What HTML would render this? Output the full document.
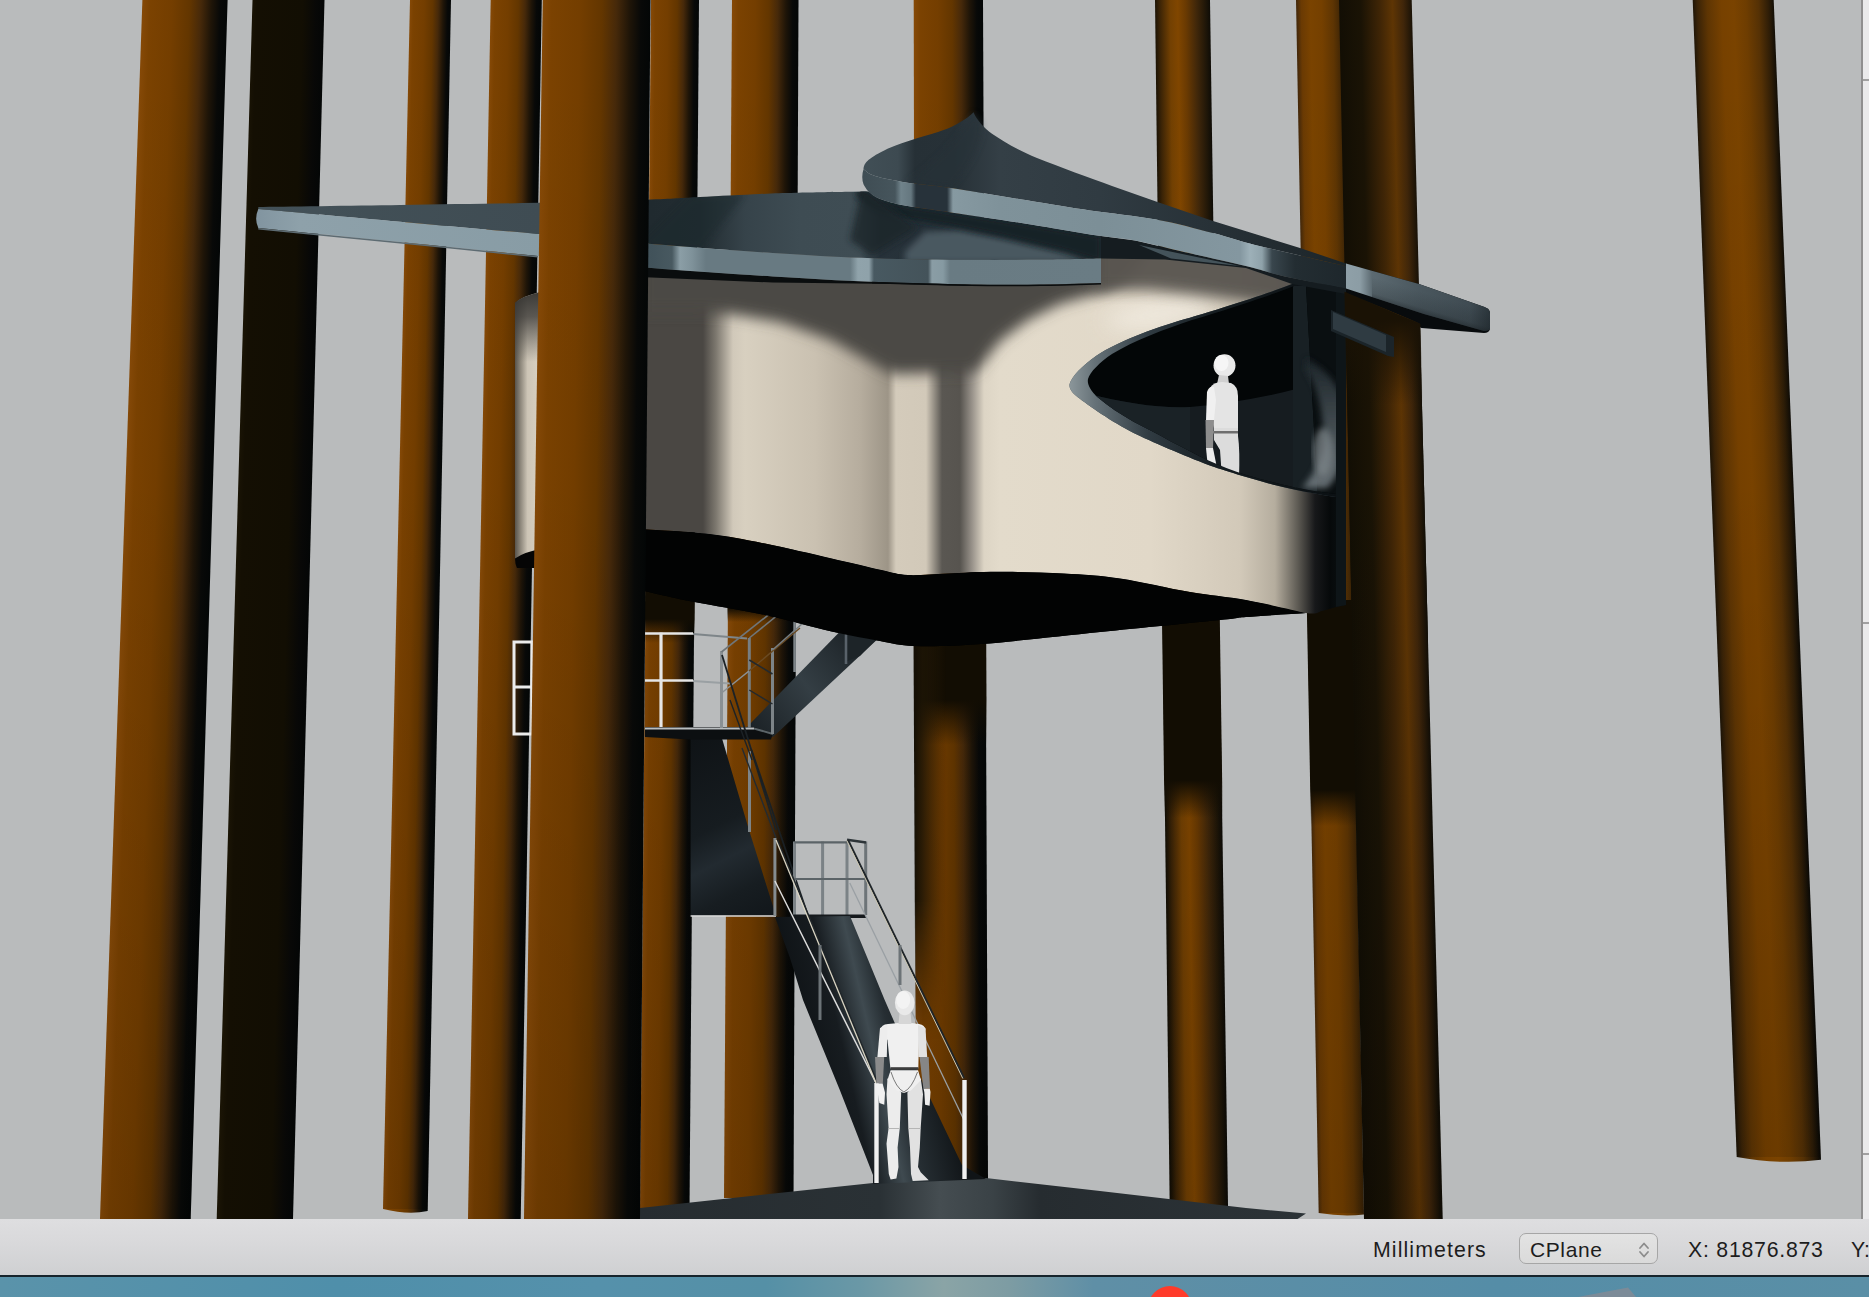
<!DOCTYPE html>
<html lang="en">
<head>
<meta charset="utf-8">
<title>Rhino viewport</title>
<style>
html,body{margin:0;padding:0;}
body{width:1869px;height:1297px;overflow:hidden;position:relative;background:#e9e9e9;font-family:"Liberation Sans",sans-serif;}
#vp{position:absolute;left:0;top:0;width:1862px;height:1219px;background:#b9bbbc;overflow:hidden;}
#side{position:absolute;left:1861px;top:0;width:8px;height:1219px;background:#eaeaeb;border-left:2px solid #8f8f8f;box-sizing:border-box;}
#side i{position:absolute;left:0;width:7px;height:2px;background:#a0a0a0;}
#status{position:absolute;left:0;top:1219px;width:1869px;height:56px;background:linear-gradient(#dedee0,#d9d9db 40%,#cfd0d2);}
#status span{position:absolute;top:2.7px;line-height:57px;font-size:21.3px;color:#1d1d1d;white-space:nowrap;}
#sel{position:absolute;left:1519px;top:14px;width:139px;height:31px;box-sizing:border-box;border:1.5px solid #a6a6a6;border-radius:7px;background:linear-gradient(#e3e3e3,#dadada);}
#sel b{position:absolute;left:10px;top:1px;line-height:29px;font-size:21px;font-weight:normal;color:#1d1d1d;letter-spacing:.6px;}
#sel svg{position:absolute;left:117px;top:6px;}
#line{position:absolute;left:0;top:1274.5px;width:1869px;height:3px;background:#16242c;}
#desk{position:absolute;left:0;top:1277px;width:1869px;height:20px;overflow:hidden;background:linear-gradient(90deg,#5a93aa 0,#4f8faa 18%,#5591ab 32%,#5590a6 41%,#6a98a6 46%,#8aa4a6 50.5%,#7d9ca3 54%,#5f8fa6 58.5%,#558da7 80%,#5a8fa6 100%);}
#dot{position:absolute;left:1148px;top:9px;width:44px;height:44px;border-radius:50%;background:#ff3b2b;}
#shape{position:absolute;left:1578px;top:0;width:62px;height:20px;}
</style>
</head>
<body>
<div id="vp">
<svg width="1862" height="1219" viewBox="0 0 1862 1219" style="position:absolute;left:0;top:0">
<defs>
<linearGradient id="vdark" gradientUnits="userSpaceOnUse" x1="0" y1="0" x2="0" y2="1219"><stop offset="0" stop-color="#000" stop-opacity="0"/><stop offset="0.4" stop-color="#000" stop-opacity="0.02"/><stop offset="1" stop-color="#000" stop-opacity="0.13"/></linearGradient>
<linearGradient id="pg1" gradientUnits="userSpaceOnUse" x1="234.6" y1="609.5" x2="308.7" y2="611.5"><stop offset="0.00" stop-color="#1a1405"/><stop offset="0.08" stop-color="#140f03"/><stop offset="0.70" stop-color="#120e03"/><stop offset="0.88" stop-color="#080807"/><stop offset="1.00" stop-color="#040606"/></linearGradient>
<linearGradient id="pg2" gradientUnits="userSpaceOnUse" x1="396.5" y1="606.0" x2="439.3" y2="606.9"><stop offset="0.00" stop-color="#874a08"/><stop offset="0.10" stop-color="#7b4201"/><stop offset="0.35" stop-color="#743e00"/><stop offset="0.55" stop-color="#633600"/><stop offset="0.68" stop-color="#46290a"/><stop offset="0.80" stop-color="#1f1508"/><stop offset="0.90" stop-color="#080908"/><stop offset="1.00" stop-color="#030606"/></linearGradient>
<linearGradient id="pg3" gradientUnits="userSpaceOnUse" x1="479.4" y1="609.5" x2="531.2" y2="610.4"><stop offset="0.00" stop-color="#874a08"/><stop offset="0.10" stop-color="#7b4201"/><stop offset="0.35" stop-color="#743e00"/><stop offset="0.55" stop-color="#633600"/><stop offset="0.68" stop-color="#46290a"/><stop offset="0.80" stop-color="#1f1508"/><stop offset="0.90" stop-color="#080908"/><stop offset="1.00" stop-color="#030606"/></linearGradient>
<linearGradient id="pg4" gradientUnits="userSpaceOnUse" x1="645.5" y1="604.0" x2="694.2" y2="604.4"><stop offset="0.00" stop-color="#874a08"/><stop offset="0.10" stop-color="#7b4201"/><stop offset="0.35" stop-color="#743e00"/><stop offset="0.55" stop-color="#633600"/><stop offset="0.68" stop-color="#46290a"/><stop offset="0.80" stop-color="#1f1508"/><stop offset="0.90" stop-color="#080908"/><stop offset="1.00" stop-color="#030606"/></linearGradient>
<linearGradient id="sg5" gradientUnits="userSpaceOnUse" x1="0" y1="585.0" x2="0" y2="643.0"><stop offset="0" stop-color="#120d03"/><stop offset="0.586" stop-color="#120d03"/><stop offset="1" stop-color="#120d03" stop-opacity="0"/></linearGradient>
<linearGradient id="pg6" gradientUnits="userSpaceOnUse" x1="728.0" y1="599.0" x2="796.0" y2="599.4"><stop offset="0.00" stop-color="#874a08"/><stop offset="0.10" stop-color="#7b4201"/><stop offset="0.35" stop-color="#743e00"/><stop offset="0.55" stop-color="#633600"/><stop offset="0.68" stop-color="#46290a"/><stop offset="0.80" stop-color="#1f1508"/><stop offset="0.90" stop-color="#080908"/><stop offset="1.00" stop-color="#030606"/></linearGradient>
<linearGradient id="sg7" gradientUnits="userSpaceOnUse" x1="0" y1="600.0" x2="0" y2="622.0"><stop offset="0" stop-color="#120d03"/><stop offset="0.364" stop-color="#120d03"/><stop offset="1" stop-color="#120d03" stop-opacity="0"/></linearGradient>
<linearGradient id="pg8" gradientUnits="userSpaceOnUse" x1="914.9" y1="591.0" x2="985.5" y2="590.8"><stop offset="0.00" stop-color="#874a08"/><stop offset="0.10" stop-color="#7b4201"/><stop offset="0.35" stop-color="#743e00"/><stop offset="0.55" stop-color="#633600"/><stop offset="0.68" stop-color="#46290a"/><stop offset="0.80" stop-color="#1f1508"/><stop offset="0.90" stop-color="#080908"/><stop offset="1.00" stop-color="#030606"/></linearGradient>
<linearGradient id="sg9" gradientUnits="userSpaceOnUse" x1="0" y1="640.0" x2="0" y2="745.0"><stop offset="0" stop-color="#120d03"/><stop offset="0.571" stop-color="#120d03"/><stop offset="1" stop-color="#120d03" stop-opacity="0"/></linearGradient>
<linearGradient id="hle" gradientUnits="userSpaceOnUse" x1="914" y1="0" x2="946" y2="0"><stop offset="0" stop-color="#130e04"/><stop offset="0.25" stop-color="#1d1506" stop-opacity=".85"/><stop offset="1" stop-color="#2a1c07" stop-opacity="0"/></linearGradient>
<linearGradient id="hlm" gradientUnits="userSpaceOnUse" x1="0" y1="900" x2="0" y2="1040"><stop offset="0" stop-color="#fff"/><stop offset="1" stop-color="#fff" stop-opacity="0"/></linearGradient>
<mask id="hmask" maskUnits="userSpaceOnUse" x="900" y="640" width="60" height="420"><rect x="900" y="640" width="60" height="420" fill="url(#hlm)"/><rect x="900" y="640" width="60" height="262" fill="#fff"/></mask>
<linearGradient id="pg10" gradientUnits="userSpaceOnUse" x1="1162.4" y1="606.0" x2="1219.0" y2="605.2"><stop offset="0.00" stop-color="#140f05"/><stop offset="0.10" stop-color="#3a2306"/><stop offset="0.28" stop-color="#724002"/><stop offset="0.42" stop-color="#804600"/><stop offset="0.56" stop-color="#6a3a02"/><stop offset="0.75" stop-color="#40270a"/><stop offset="0.92" stop-color="#1d1508"/><stop offset="1.00" stop-color="#0d0b06"/></linearGradient>
<linearGradient id="sg11" gradientUnits="userSpaceOnUse" x1="0" y1="600.0" x2="0" y2="818.0"><stop offset="0" stop-color="#120d03"/><stop offset="0.826" stop-color="#120d03"/><stop offset="1" stop-color="#120d03" stop-opacity="0"/></linearGradient>
<linearGradient id="pg12" gradientUnits="userSpaceOnUse" x1="1307.3" y1="607.5" x2="1352.5" y2="606.7"><stop offset="0.00" stop-color="#44280a"/><stop offset="0.10" stop-color="#6a3a03"/><stop offset="0.30" stop-color="#7a4300"/><stop offset="0.55" stop-color="#754000"/><stop offset="0.80" stop-color="#5e3503"/><stop offset="1.00" stop-color="#3a2306"/></linearGradient>
<linearGradient id="sg13" gradientUnits="userSpaceOnUse" x1="0" y1="600.0" x2="0" y2="826.0"><stop offset="0" stop-color="#120d03"/><stop offset="0.841" stop-color="#120d03"/><stop offset="1" stop-color="#120d03" stop-opacity="0"/></linearGradient>
<linearGradient id="pg14" gradientUnits="userSpaceOnUse" x1="1351.5" y1="609.5" x2="1427.2" y2="607.8"><stop offset="0.00" stop-color="#120e04"/><stop offset="0.30" stop-color="#1a1305"/><stop offset="0.55" stop-color="#3f2506"/><stop offset="0.72" stop-color="#5e3504"/><stop offset="0.86" stop-color="#40260a"/><stop offset="1.00" stop-color="#120e06"/></linearGradient>
<linearGradient id="gnd" gradientUnits="userSpaceOnUse" x1="640" y1="0" x2="1306" y2="0"><stop offset="0" stop-color="#262c30"/><stop offset="0.36" stop-color="#2a3135"/><stop offset="0.45" stop-color="#454d51"/><stop offset="0.53" stop-color="#3a4246"/><stop offset="0.6" stop-color="#262c30"/><stop offset="1" stop-color="#2c3337"/></linearGradient>
<linearGradient id="wl" gradientUnits="userSpaceOnUse" x1="515" y1="0" x2="540" y2="0"><stop offset="0" stop-color="#57534c"/><stop offset="0.22" stop-color="#8d877b"/><stop offset="0.5" stop-color="#cdc5b6"/><stop offset="1" stop-color="#d9d1c2"/></linearGradient>
<linearGradient id="wls" gradientUnits="userSpaceOnUse" x1="0" y1="292" x2="0" y2="362"><stop offset="0" stop-color="#33322f" stop-opacity="0.95"/><stop offset="0.35" stop-color="#3d3b38" stop-opacity="0.8"/><stop offset="1" stop-color="#4a4844" stop-opacity="0"/></linearGradient>
<linearGradient id="wall" gradientUnits="userSpaceOnUse" x1="640" y1="0" x2="1346" y2="0"><stop offset="0.0000" stop-color="#4a4743"/><stop offset="0.0892" stop-color="#4a4743"/><stop offset="0.1076" stop-color="#7d786f"/><stop offset="0.1317" stop-color="#d1c9ba"/><stop offset="0.1487" stop-color="#d8d0c0"/><stop offset="0.2479" stop-color="#cac1b1"/><stop offset="0.3116" stop-color="#b6ad9e"/><stop offset="0.3513" stop-color="#9d9587"/><stop offset="0.3626" stop-color="#d4cbbb"/><stop offset="0.4051" stop-color="#d2c9b9"/><stop offset="0.4278" stop-color="#5a5752"/><stop offset="0.4533" stop-color="#57544f"/><stop offset="0.4703" stop-color="#98928a"/><stop offset="0.4873" stop-color="#ddd5c5"/><stop offset="0.5099" stop-color="#e3dbcb"/><stop offset="0.7224" stop-color="#e1d8c8"/><stop offset="0.8499" stop-color="#d2c9b9"/><stop offset="0.8994" stop-color="#b5ad9e"/><stop offset="0.9320" stop-color="#5d5a53"/><stop offset="0.9561" stop-color="#17181a"/><stop offset="0.9773" stop-color="#06090a"/><stop offset="1.0000" stop-color="#0c1214"/></linearGradient>
<filter id="b6" x="-10%" y="-30%" width="120%" height="160%"><feGaussianBlur stdDeviation="7"/></filter>
<filter id="b10" x="-20%" y="-40%" width="140%" height="180%"><feGaussianBlur stdDeviation="11"/></filter>
<filter id="b3" x="-10%" y="-30%" width="120%" height="160%"><feGaussianBlur stdDeviation="3"/></filter>
<clipPath id="wallclip"><path d="M640,250 L1101,250 L1250,256 L1346,276 L1346.0,605.0 C1344.3,605.3 1340.0,606.0 1336.0,607.0 C1332.0,608.0 1327.0,610.0 1322.0,611.0 C1317.0,612.0 1318.7,614.8 1306.0,613.0 C1293.3,611.2 1265.3,603.5 1246.0,600.0 C1226.7,596.5 1211.0,595.6 1190.0,592.0 C1169.0,588.4 1141.0,581.5 1120.0,578.4 C1099.0,575.3 1084.4,574.5 1064.0,573.4 C1043.6,572.3 1017.0,571.8 997.6,571.8 C978.2,571.8 962.7,572.9 947.8,573.4 C932.9,573.9 919.0,575.6 908.0,575.0 C897.0,574.4 894.2,572.8 881.5,570.0 C868.8,567.2 851.1,562.9 831.7,558.5 C812.3,554.1 786.0,547.8 765.0,543.6 C744.0,539.5 726.5,536.0 705.7,533.6 C684.9,531.2 651.0,529.8 640.0,529.0 Z"/></clipPath>
<linearGradient id="rim" gradientUnits="userSpaceOnUse" x1="1069" y1="0" x2="1336" y2="0"><stop offset="0" stop-color="#8c979b"/><stop offset="0.1" stop-color="#657177"/><stop offset="0.3" stop-color="#303b42"/><stop offset="0.55" stop-color="#161d21"/><stop offset="1" stop-color="#0b1013"/></linearGradient>
<clipPath id="inclip"><path d="M1088,379 C1090,372 1100,362 1112,354 C1135,340 1165,329 1192,320 C1217,312.5 1262,298.5 1294,286 L1346,286 L1346,495.5 L1336,494 C1322,492 1306,490 1293,487 C1275,483 1262,479.5 1246,475 C1232,470.5 1220,465.5 1208.5,460.5 C1195,454 1183,447.5 1171,441.5 C1158,434 1145,427.5 1133.6,421.7 C1120,414 1108,406 1098,397.5 C1090,390 1087,384 1088,379 Z"/></clipPath>
<linearGradient id="cres" gradientUnits="userSpaceOnUse" x1="0" y1="358" x2="0" y2="490"><stop offset="0" stop-color="#1f282d"/><stop offset="0.45" stop-color="#434d52"/><stop offset="1" stop-color="#727b80"/></linearGradient>
<linearGradient id="lst" gradientUnits="userSpaceOnUse" x1="258" y1="0" x2="1101" y2="0"><stop offset="0.0000" stop-color="#435158"/><stop offset="0.3345" stop-color="#3f4c53"/><stop offset="0.4662" stop-color="#202a2f"/><stop offset="0.5243" stop-color="#222c31"/><stop offset="0.5777" stop-color="#36434a"/><stop offset="0.6429" stop-color="#3e4c53"/><stop offset="0.7141" stop-color="#3f4d54"/><stop offset="0.7378" stop-color="#27323a"/><stop offset="1.0000" stop-color="#222c31"/></linearGradient>
<clipPath id="lstclip"><path d="M258.3,207.0 C281.9,206.7 353.3,205.7 400.0,205.0 C446.7,204.3 496.8,203.7 538.6,202.8 C580.4,201.9 624.1,200.5 651.0,199.5 C677.9,198.5 681.8,197.9 700.0,197.0 C718.2,196.1 744.0,194.7 760.0,194.0 C776.0,193.3 781.0,193.2 796.0,192.8 C811.0,192.4 838.3,192.0 850.0,191.8 C861.7,191.6 863.3,191.6 866.0,191.5 L868.7,191.8 C870.6,193.0 873.8,196.7 880.0,199.0 C886.2,201.3 894.2,203.6 906.0,205.8 C917.8,208.0 932.2,209.6 951.0,212.4 C969.8,215.2 995.3,218.8 1018.5,222.5 C1041.7,226.2 1078.1,232.4 1090.0,234.4 L1101,236 L1101.0,258.5 C1090.8,258.7 1061.5,259.4 1040.0,259.6 C1018.5,259.8 999.7,260.0 971.7,259.8 C943.7,259.6 905.2,259.3 872.0,258.2 C838.8,257.1 809.4,255.4 772.7,253.0 C736.0,250.6 690.7,247.2 651.6,244.0 C612.5,240.8 579.9,237.7 538.0,234.0 C496.1,230.3 446.6,225.9 400.0,221.7 C353.4,217.5 281.9,211.1 258.3,209.0 Z"/></clipPath>
<linearGradient id="lsf" gradientUnits="userSpaceOnUse" x1="258" y1="0" x2="1101" y2="0"><stop offset="0.0000" stop-color="#8295a0"/><stop offset="0.0498" stop-color="#8ea1aa"/><stop offset="0.3345" stop-color="#889ca5"/><stop offset="0.4662" stop-color="#41525a"/><stop offset="0.4911" stop-color="#485960"/><stop offset="0.5006" stop-color="#8b9ea6"/><stop offset="0.5148" stop-color="#7f929a"/><stop offset="0.5314" stop-color="#687a82"/><stop offset="0.7023" stop-color="#687a82"/><stop offset="0.7117" stop-color="#90a3ab"/><stop offset="0.7248" stop-color="#8fa2aa"/><stop offset="0.7307" stop-color="#485961"/><stop offset="0.7948" stop-color="#44535a"/><stop offset="0.7995" stop-color="#8a9da5"/><stop offset="0.8126" stop-color="#869aa2"/><stop offset="0.8209" stop-color="#697b83"/><stop offset="1.0000" stop-color="#6a7c84"/></linearGradient>
<linearGradient id="ust" gradientUnits="userSpaceOnUse" x1="863" y1="0" x2="1346" y2="0"><stop offset="0.0000" stop-color="#414f56"/><stop offset="0.0725" stop-color="#3d4a51"/><stop offset="0.1077" stop-color="#263036"/><stop offset="0.1905" stop-color="#273137"/><stop offset="0.2836" stop-color="#343f46"/><stop offset="0.4907" stop-color="#303b42"/><stop offset="0.6977" stop-color="#283238"/><stop offset="0.8634" stop-color="#222b30"/><stop offset="1.0000" stop-color="#1c2529"/></linearGradient>
<linearGradient id="usb" gradientUnits="userSpaceOnUse" x1="863" y1="0" x2="1346" y2="0"><stop offset="0.0000" stop-color="#3f4d54"/><stop offset="0.0663" stop-color="#46555c"/><stop offset="0.0787" stop-color="#70838b"/><stop offset="0.0994" stop-color="#65777f"/><stop offset="0.1097" stop-color="#27323a"/><stop offset="0.1739" stop-color="#27323a"/><stop offset="0.1863" stop-color="#8699a1"/><stop offset="0.2836" stop-color="#7f929a"/><stop offset="0.4907" stop-color="#7c8f97"/><stop offset="0.7805" stop-color="#8497a0"/><stop offset="0.8012" stop-color="#9db0b8"/><stop offset="0.8261" stop-color="#8fa2aa"/><stop offset="0.8468" stop-color="#39464d"/><stop offset="0.8944" stop-color="#232d32"/><stop offset="1.0000" stop-color="#1e272c"/></linearGradient>
<linearGradient id="usr" gradientUnits="userSpaceOnUse" x1="1346" y1="0" x2="1490" y2="0"><stop offset="0.0000" stop-color="#8fa0a8"/><stop offset="0.0972" stop-color="#8c9da5"/><stop offset="0.1806" stop-color="#5c6a71"/><stop offset="0.5139" stop-color="#4a575e"/><stop offset="0.8611" stop-color="#3f4b52"/><stop offset="1.0000" stop-color="#2a343a"/></linearGradient>
<linearGradient id="usr2" gradientUnits="userSpaceOnUse" x1="1400" y1="285" x2="1392" y2="312"><stop offset="0" stop-color="#0b0f11" stop-opacity="0"/><stop offset="0.55" stop-color="#0b0f11" stop-opacity="0.15"/><stop offset="1" stop-color="#0b0f11" stop-opacity="0.7"/></linearGradient>
<clipPath id="kclip"><polygon points="1340,290 1440,332 1440,640 1340,640"/></clipPath>
<linearGradient id="pg15" gradientUnits="userSpaceOnUse" x1="1348.4" y1="460.0" x2="1423.4" y2="458.3"><stop offset="0.00" stop-color="#120e04"/><stop offset="0.30" stop-color="#1a1305"/><stop offset="0.55" stop-color="#3f2506"/><stop offset="0.72" stop-color="#5e3504"/><stop offset="0.86" stop-color="#40260a"/><stop offset="1.00" stop-color="#120e06"/></linearGradient>
<linearGradient id="sg16" gradientUnits="userSpaceOnUse" x1="0" y1="280.0" x2="0" y2="405.0"><stop offset="0" stop-color="#1a1205"/><stop offset="0.320" stop-color="#1a1205"/><stop offset="1" stop-color="#1a1205" stop-opacity="0"/></linearGradient>
<linearGradient id="str1" gradientUnits="userSpaceOnUse" x1="751" y1="735" x2="880" y2="632"><stop offset="0" stop-color="#1a2024"/><stop offset="0.45" stop-color="#343e44"/><stop offset="0.7" stop-color="#262e33"/><stop offset="1" stop-color="#14191c"/></linearGradient>
<linearGradient id="pan" gradientUnits="userSpaceOnUse" x1="690" y1="740" x2="780" y2="915"><stop offset="0" stop-color="#0f1316"/><stop offset="0.45" stop-color="#161c20"/><stop offset="0.62" stop-color="#222a30"/><stop offset="0.8" stop-color="#171d21"/><stop offset="1" stop-color="#11161a"/></linearGradient>
<linearGradient id="str2" gradientUnits="userSpaceOnUse" x1="800" y1="1040" x2="930" y2="1010"><stop offset="0" stop-color="#0f1316"/><stop offset="0.3" stop-color="#171c20"/><stop offset="0.52" stop-color="#3f4a50"/><stop offset="0.66" stop-color="#262e33"/><stop offset="1" stop-color="#101417"/></linearGradient>
<linearGradient id="pg17" gradientUnits="userSpaceOnUse" x1="533.4" y1="609.5" x2="645.2" y2="610.8"><stop offset="0.00" stop-color="#874a08"/><stop offset="0.10" stop-color="#7b4201"/><stop offset="0.35" stop-color="#743e00"/><stop offset="0.55" stop-color="#633600"/><stop offset="0.68" stop-color="#46290a"/><stop offset="0.80" stop-color="#1f1508"/><stop offset="0.90" stop-color="#080908"/><stop offset="1.00" stop-color="#030606"/></linearGradient>
<linearGradient id="pg18" gradientUnits="userSpaceOnUse" x1="121.2" y1="609.5" x2="209.1" y2="612.4"><stop offset="0.00" stop-color="#874a08"/><stop offset="0.10" stop-color="#7b4201"/><stop offset="0.35" stop-color="#743e00"/><stop offset="0.55" stop-color="#633600"/><stop offset="0.68" stop-color="#46290a"/><stop offset="0.80" stop-color="#1f1508"/><stop offset="0.90" stop-color="#080908"/><stop offset="1.00" stop-color="#030606"/></linearGradient>
<linearGradient id="pg19" gradientUnits="userSpaceOnUse" x1="1714.7" y1="580.5" x2="1797.2" y2="577.3"><stop offset="0.00" stop-color="#1d1407"/><stop offset="0.06" stop-color="#3a2307"/><stop offset="0.18" stop-color="#5e3503"/><stop offset="0.35" stop-color="#774100"/><stop offset="0.50" stop-color="#7a4300"/><stop offset="0.65" stop-color="#6e3d01"/><stop offset="0.80" stop-color="#553105"/><stop offset="0.92" stop-color="#2e1d07"/><stop offset="1.00" stop-color="#0d0b06"/></linearGradient>
</defs>
<polygon points="252.5,0.0 324.5,0.0 293.0,1219.0 216.7,1219.0" fill="url(#pg1)" />
<path d="M410.0,0.0 L451.0,0.0 L427.7,1211.1 Q407.4,1215.0 383.0,1209.0 Z" fill="url(#pg2)" />
<polygon points="410.0,0.0 451.0,0.0 427.7,1209.0 383.0,1209.0" fill="url(#vdark)"/>
<polygon points="490.7,0.0 541.8,0.0 520.7,1219.0 468.0,1219.0" fill="url(#pg3)" />
<polygon points="490.7,0.0 541.8,0.0 520.7,1219.0 468.0,1219.0" fill="url(#vdark)"/>
<polygon points="651.0,0.0 699.0,0.0 689.5,1208.0 640.0,1208.0" fill="url(#pg4)" />
<polygon points="651.0,0.0 699.0,0.0 689.5,1208.0 640.0,1208.0" fill="url(#vdark)"/>
<polygon points="645.2,585.0 694.9,585.0 694.4,643.0 644.6,643.0" fill="url(#sg5)"/>
<polygon points="732.0,0.0 798.5,0.0 793.5,1198.0 724.0,1198.0" fill="url(#pg6)" />
<polygon points="732.0,0.0 798.5,0.0 793.5,1198.0 724.0,1198.0" fill="url(#vdark)"/>
<polygon points="727.5,600.0 796.5,600.0 796.4,622.0 727.3,622.0" fill="url(#sg7)"/>
<polygon points="913.7,0.0 983.0,0.0 988.0,1182.0 916.0,1182.0" fill="url(#pg8)" />
<polygon points="913.7,0.0 983.0,0.0 988.0,1182.0 916.0,1182.0" fill="url(#vdark)"/>
<polygon points="914.4,640.0 986.2,640.0 986.7,745.0 914.6,745.0" fill="url(#sg9)"/>
<polygon points="913.5,640 948,640 948,1050 915.5,1050" fill="url(#hle)" mask="url(#hmask)"/>
<polygon points="1155.0,0.0 1210.0,0.0 1228.1,1212.0 1169.8,1212.0" fill="url(#pg10)" />
<polygon points="1155.0,0.0 1210.0,0.0 1228.1,1212.0 1169.8,1212.0" fill="url(#vdark)"/>
<polygon points="1161.8,600.0 1219.5,600.0 1222.7,818.0 1164.5,818.0" fill="url(#sg11)"/>
<path d="M1296.0,0.0 L1341.0,0.0 L1364.0,1214.4 Q1343.3,1217.0 1318.7,1213.0 Z" fill="url(#pg12)" />
<polygon points="1296.0,0.0 1341.0,0.0 1364.0,1213.0 1318.7,1213.0" fill="url(#vdark)"/>
<polygon points="1306.7,600.0 1352.9,600.0 1357.1,826.0 1310.9,826.0" fill="url(#sg13)"/>
<polygon points="1339.0,0.0 1411.7,0.0 1442.7,1219.0 1364.0,1219.0" fill="url(#pg14)" />
<polygon points="1339.0,0.0 1411.7,0.0 1442.7,1219.0 1364.0,1219.0" fill="url(#vdark)"/>
<polygon points="638.0,1220.0 640.0,1208.0 760.0,1195.0 873.0,1183.0 986.0,1178.0 1100.0,1191.0 1246.0,1208.0 1306.0,1213.5 1296.0,1220.0" fill="url(#gnd)"/>
<path d="M515,303 Q522,296 541,292 L541,568 L517,568 Q515,564 515,558 Z" fill="#050505"/>
<path d="M515,303 Q522,296 541,292 L541,549 Q524,552 515,558.5 Z" fill="url(#wl)"/>
<path d="M515,303 Q522,296 541,292 L541,365 L515,365 Z" fill="url(#wls)"/>
<path d="M640.0,529.0 C651.0,529.8 684.9,531.2 705.7,533.6 C726.5,536.0 744.0,539.5 765.0,543.6 C786.0,547.8 812.3,554.1 831.7,558.5 C851.1,562.9 868.8,567.2 881.5,570.0 C894.2,572.8 897.0,574.4 908.0,575.0 C919.0,575.6 932.9,573.9 947.8,573.4 C962.7,572.9 978.2,571.8 997.6,571.8 C1017.0,571.8 1043.6,572.3 1064.0,573.4 C1084.4,574.5 1099.0,575.3 1120.0,578.4 C1141.0,581.5 1169.0,588.4 1190.0,592.0 C1211.0,595.6 1226.7,596.5 1246.0,600.0 C1265.3,603.5 1296.0,610.8 1306.0,613.0 L1306.0,613.0 C1296.0,613.7 1260.3,615.8 1246.0,617.0 C1231.7,618.2 1244.3,617.5 1220.0,620.0 C1195.7,622.5 1139.8,628.0 1100.0,632.0 C1060.2,636.0 1011.9,641.7 981.0,644.0 C950.1,646.3 931.5,646.5 914.7,646.0 C897.9,645.5 893.8,643.4 880.0,641.0 C866.2,638.6 850.9,635.8 831.7,631.5 C812.5,627.2 788.3,620.0 765.0,615.0 C741.7,610.0 712.8,605.8 692.0,601.6 C671.2,597.4 648.7,591.9 640.0,590.0 Z" fill="#020303"/>
<path d="M640,250 L1101,250 L1250,256 L1346,276 L1346.0,605.0 C1344.3,605.3 1340.0,606.0 1336.0,607.0 C1332.0,608.0 1327.0,610.0 1322.0,611.0 C1317.0,612.0 1318.7,614.8 1306.0,613.0 C1293.3,611.2 1265.3,603.5 1246.0,600.0 C1226.7,596.5 1211.0,595.6 1190.0,592.0 C1169.0,588.4 1141.0,581.5 1120.0,578.4 C1099.0,575.3 1084.4,574.5 1064.0,573.4 C1043.6,572.3 1017.0,571.8 997.6,571.8 C978.2,571.8 962.7,572.9 947.8,573.4 C932.9,573.9 919.0,575.6 908.0,575.0 C897.0,574.4 894.2,572.8 881.5,570.0 C868.8,567.2 851.1,562.9 831.7,558.5 C812.3,554.1 786.0,547.8 765.0,543.6 C744.0,539.5 726.5,536.0 705.7,533.6 C684.9,531.2 651.0,529.8 640.0,529.0 Z" fill="url(#wall)"/>
<g clip-path="url(#wallclip)"><polygon points="640.0,240.0 1150.0,240.0 1142.0,262.0 1126.0,280.0 1104.0,292.0 1085.0,297.0 1060.0,304.0 1028.0,320.0 1000.0,341.0 985.0,360.0 975.0,372.0 893.0,374.0 881.0,368.0 831.0,340.0 780.0,322.0 732.0,314.0 700.0,312.0 640.0,312.0" fill="#4b4844" filter="url(#b6)"/>
<ellipse cx="1160" cy="314" rx="56" ry="11" fill="#f4efe5" opacity=".9" filter="url(#b10)" transform="rotate(-8 1160 314)"/>
<polygon points="1095.0,245.0 1310.0,245.0 1310.0,308.0 1270.0,304.0 1230.0,299.0 1190.0,294.0 1150.0,290.0 1095.0,290.0" fill="#5a5751" filter="url(#b6)" opacity=".97"/>
</g>
<path d="M1069.6,384 C1072,376 1082,366 1096,356 C1120,340 1160,326 1190,317.8 C1215,310 1262,296 1292,284 L1346,284 L1346,498 L1336,497 C1322,495 1300,491 1283,487 C1262,482 1225,471 1208.5,465 C1185,456 1150,441 1133.6,433 C1112,422 1088,405 1077.5,397 C1071,392 1069,388 1069.6,384 Z" fill="#3c474d"/>
<path d="M1069.6,384 C1072,376 1082,366 1096,356 C1120,340 1160,326 1190,317.8 C1215,310 1262,296 1292,284 L1346,284 L1346,498 L1336,497 C1322,495 1300,491 1283,487 C1262,482 1225,471 1208.5,465 C1185,456 1150,441 1133.6,433 C1112,422 1088,405 1077.5,397 C1071,392 1069,388 1069.6,384 Z" fill="url(#rim)"/>
<path d="M1088,379 C1090,372 1100,362 1112,354 C1135,340 1165,329 1192,320 C1217,312.5 1262,298.5 1294,286 L1346,286 L1346,495.5 L1336,494 C1322,492 1306,490 1293,487 C1275,483 1262,479.5 1246,475 C1232,470.5 1220,465.5 1208.5,460.5 C1195,454 1183,447.5 1171,441.5 C1158,434 1145,427.5 1133.6,421.7 C1120,414 1108,406 1098,397.5 C1090,390 1087,384 1088,379 Z" fill="#030607"/>
<g clip-path="url(#inclip)">
<path d="M1080,392 C1120,402 1160,409 1190,407 C1225,404 1262,398 1296,389 L1296,500 L1080,500 Z" fill="#161c20"/>
<path d="M1080,392 C1120,402 1160,409 1190,407 L1190,500 L1080,500 Z" fill="#1d252a" opacity=".7"/>
<polygon points="1293,286 1306,286 1318,500 1293,500" fill="#182024"/>
<polygon points="1306,286 1346,286 1346,500 1318,500" fill="#0a0f11"/>
<path d="M1306,358 C1330,372 1344,390 1346,420 C1348,455 1340,475 1327,488 L1302,488 C1318,470 1324,452 1323,430 C1322,405 1316,385 1306,371 Z" fill="url(#cres)" opacity=".9" filter="url(#b3)"/>
<ellipse cx="1323" cy="452" rx="10" ry="24" fill="#7f878b" opacity=".7" filter="url(#b3)"/>
<ellipse cx="1224.5" cy="365.5" rx="11" ry="11.3" fill="#e9e9e9"/>
<ellipse cx="1221.5" cy="363" rx="7" ry="8" fill="#f6f6f6"/>
<path d="M1219,375 L1228,376 L1229,384 L1217,384 Z" fill="#d0d0d0"/>
<path d="M1210,388 Q1213,382 1222,382 L1231,383 Q1238,386 1238,396 L1238,428 L1214,428 L1209,410 Z" fill="#e4e4e4"/>
<path d="M1214,428 L1238,428 L1238,436 Q1240,450 1239,478 L1222,478 L1220,450 L1214,440 Z" fill="#dcdcdc"/>
<path d="M1213,431 L1238,431 L1238,433.5 L1213,433.5 Z" fill="#6e6e6e"/>
<path d="M1207,392 Q1209,386 1214,387 L1216,400 L1214,420 L1206,420 Z" fill="#f0f0f0"/>
<path d="M1205.5,420 L1214,420 L1213,448 L1206,448 Z" fill="#8d8d8d"/>
<path d="M1206,448 L1213,448 L1217,468 L1208,468 Z" fill="#ececec"/>
</g>
<polygon points="1336,284 1346,284 1346,605 1336,607" fill="#0e1518"/>
<path d="M258.3,207.0 C281.9,206.7 353.3,205.7 400.0,205.0 C446.7,204.3 496.8,203.7 538.6,202.8 C580.4,201.9 624.1,200.5 651.0,199.5 C677.9,198.5 681.8,197.9 700.0,197.0 C718.2,196.1 744.0,194.7 760.0,194.0 C776.0,193.3 781.0,193.2 796.0,192.8 C811.0,192.4 838.3,192.0 850.0,191.8 C861.7,191.6 863.3,191.6 866.0,191.5 L868.7,191.8 C870.6,193.0 873.8,196.7 880.0,199.0 C886.2,201.3 894.2,203.6 906.0,205.8 C917.8,208.0 932.2,209.6 951.0,212.4 C969.8,215.2 995.3,218.8 1018.5,222.5 C1041.7,226.2 1078.1,232.4 1090.0,234.4 L1101,236 L1101.0,258.5 C1090.8,258.7 1061.5,259.4 1040.0,259.6 C1018.5,259.8 999.7,260.0 971.7,259.8 C943.7,259.6 905.2,259.3 872.0,258.2 C838.8,257.1 809.4,255.4 772.7,253.0 C736.0,250.6 690.7,247.2 651.6,244.0 C612.5,240.8 579.9,237.7 538.0,234.0 C496.1,230.3 446.6,225.9 400.0,221.7 C353.4,217.5 281.9,211.1 258.3,209.0 Z" fill="url(#lst)"/>
<g clip-path="url(#lstclip)">
<polygon points="905,252 925,232 960,230 1010,240 1070,254 1090,262 905,262" fill="#4a5960" filter="url(#b3)"/>
<polygon points="858.0,186.0 880.0,199.0 906.0,205.8 951.0,212.4 1018.5,222.5 1101.0,236.0 1101.0,262.0 1060.0,250.0 1000.0,236.0 950.0,226.0 900.0,218.0 872.0,208.0 856.0,196.0" fill="#182126" filter="url(#b3)"/>
<polygon points="690,196 745,194 700,250 640,246" fill="#1f292e" opacity=".55" filter="url(#b3)"/>
<polygon points="862,186 918,228 872,256 850,240" fill="#1d262b" opacity=".8" filter="url(#b3)"/>
</g>
<path d="M651.6,268.0 C671.8,269.4 736.0,274.2 772.7,276.5 C809.4,278.8 838.8,280.5 872.0,281.8 C905.2,283.1 955.1,284.1 971.7,284.5 L897,284 L772.7,282.5 L651.6,277.5 L640,277 L640,267 Z" fill="#0a0d0e"/>
<path d="M258.3,209.0 C281.9,211.1 353.4,217.5 400.0,221.7 C446.6,225.9 496.1,230.3 538.0,234.0 C579.9,237.7 612.5,240.8 651.6,244.0 C690.7,247.2 736.0,250.6 772.7,253.0 C809.4,255.4 838.8,257.1 872.0,258.2 C905.2,259.3 943.7,259.6 971.7,259.8 C999.7,260.0 1018.5,259.8 1040.0,259.6 C1061.5,259.4 1090.8,258.7 1101.0,258.5 L1101,283 L1101.0,283.0 C1090.8,283.2 1061.5,284.2 1040.0,284.5 C1018.5,284.8 999.7,284.9 971.7,284.5 C943.7,284.1 905.2,283.1 872.0,281.8 C838.8,280.5 809.4,278.8 772.7,276.5 C736.0,274.2 690.7,271.4 651.6,268.0 C612.5,264.6 579.9,260.3 538.0,256.0 C496.1,251.7 446.6,246.7 400.0,242.0 C353.4,237.3 281.9,230.3 258.3,228.0 Q254,219 258.3,209 Z" fill="url(#lsf)"/>
<path d="M872.0,282.6 C888.6,283.1 943.7,284.9 971.7,285.3 C999.7,285.8 1018.5,285.6 1040.0,285.3 C1061.5,285.1 1090.8,284.1 1101.0,283.8" fill="none" stroke="#0a0d0e" stroke-width="1.6"/>
<path d="M258.3,228.8 C281.9,231.1 353.4,238.1 400.0,242.8 C446.6,247.5 515.0,254.5 538.0,256.8" fill="none" stroke="#5d6b72" stroke-width="1.5"/>
<polygon points="1101,236 1135,240.4 1180,251 1245.8,266 1284.8,276.4 1346,288.4 1346,294 1292,284 1246,268 1165,259.5 1101,258.4" fill="#151c20"/>
<polygon points="1139,245 1240,266 1171,258.4" fill="#44535a"/>
<path d="M863.5,169.3 C864,162 869,158 887.5,148.7 C905,141 930,135 943.6,130 C955,126 968,118 973.6,112.2 C976,119 984,128 992,133.7 C1004,142 1020,151 1037,158 C1060,167 1090,178 1112,186 L1156,201.5 L1213,221 L1300,248 L1346,263.5 L1346.0,266.0 C1338.3,264.2 1315.2,258.9 1300.0,255.4 C1284.8,251.9 1269.5,248.7 1255.0,245.0 C1240.5,241.3 1229.5,237.3 1213.0,233.0 C1196.5,228.7 1176.5,223.2 1156.0,219.4 C1135.5,215.6 1109.8,213.3 1090.0,210.4 C1070.2,207.5 1060.2,205.7 1037.0,202.0 C1013.8,198.3 972.8,191.3 951.0,188.0 C929.2,184.7 918.7,184.4 906.0,182.4 C893.3,180.4 882.1,178.2 875.0,176.0 C867.9,173.8 865.4,170.4 863.5,169.3 Z" fill="url(#ust)"/>
<path d="M973.6,112.2 C960,135 935,165 906,182.4 L951,188 C975,160 985,135 981,122.5 Z" fill="#263138" opacity=".55" filter="url(#b3)"/>
<path d="M863.5,169.3 C865.4,170.4 867.9,173.8 875.0,176.0 C882.1,178.2 893.3,180.4 906.0,182.4 C918.7,184.4 929.2,184.7 951.0,188.0 C972.8,191.3 1013.8,198.3 1037.0,202.0 C1060.2,205.7 1070.2,207.5 1090.0,210.4 C1109.8,213.3 1135.5,215.6 1156.0,219.4 C1176.5,223.2 1196.5,228.7 1213.0,233.0 C1229.5,237.3 1240.5,241.3 1255.0,245.0 C1269.5,248.7 1284.8,251.9 1300.0,255.4 C1315.2,258.9 1338.3,264.2 1346.0,266.0 L1346.0,288.4 C1335.8,286.4 1301.5,280.1 1284.8,276.4 C1268.1,272.7 1263.3,270.2 1245.8,266.0 C1228.3,261.8 1198.5,255.3 1180.0,251.0 C1161.5,246.7 1150.0,243.2 1135.0,240.4 C1120.0,237.6 1109.4,237.4 1090.0,234.4 C1070.6,231.4 1041.7,226.2 1018.5,222.5 C995.3,218.8 969.8,215.2 951.0,212.4 C932.2,209.6 917.8,208.0 906.0,205.8 C894.2,203.6 886.2,201.3 880.0,199.0 C873.8,196.7 871.5,194.2 868.7,191.8 C866.0,189.4 864.4,185.6 863.5,184.3 Q861,177 863.5,169.3 Z" fill="url(#usb)"/>
<path d="M1346,263.5 L1419,284 L1484.5,307 Q1490,309 1490,313 L1490,329 Q1489,333 1484,333 L1421.5,328 L1356,298 L1346,292 Z" fill="#080b0d"/>
<path d="M1346,263.5 L1419,284 L1484.5,307 Q1490,309 1490,313 L1490,329 Q1488,331.5 1484,331 L1424,314 L1346,288.5 Z" fill="url(#usr)"/>
<path d="M1372,271 L1419,284 L1484.5,307 Q1490,309 1490,313 L1490,329 Q1488,331.5 1484,331 L1424,314 L1372,297 Z" fill="url(#usr2)"/>
<g clip-path="url(#kclip)">
<polygon points="1344.7,280.0 1418.8,280.0 1428.0,640.0 1352.1,640.0" fill="url(#pg15)" />
<polygon points="1344.7,280.0 1418.8,280.0 1428.0,640.0 1352.1,640.0" fill="url(#vdark)"/>
<polygon points="1344.2,280.0 1419.3,280.0 1422.5,405.0 1346.8,405.0" fill="url(#sg16)"/>
</g>
<polygon points="1331,310 1394,337 1394,357 1388,356 1331,331" fill="#1b2429"/>
<polygon points="1333,312 1386,335 1386,352 1333,329" fill="#2f3b42"/>
<polygon points="747,727 839,632.5 882,635 773,737" fill="url(#str1)"/>
<polygon points="845,629 882,633 860,656 845,662" fill="#1d2428"/>
<polygon points="690.6,735 721,735 749,830 776,915.7 690.6,915.7" fill="url(#pan)"/>
<line x1="690.6" y1="916.0" x2="776.0" y2="916.0" stroke="#d9d9d9" stroke-width="1.6" />
<polygon points="645,727 754,727 773,733 771,739.5 690,739.5 645,737" fill="#0c0f11"/>
<line x1="645.0" y1="728.5" x2="754.0" y2="728.5" stroke="#b9bdbf" stroke-width="2.2" />
<line x1="754.0" y1="728.5" x2="773.0" y2="734.0" stroke="#5b6468" stroke-width="2.0" />
<line x1="661.0" y1="632.7" x2="661.0" y2="727.0" stroke="#e6e6e6" stroke-width="3.2" />
<line x1="645.0" y1="633.5" x2="693.0" y2="633.5" stroke="#e6e6e6" stroke-width="2.6" />
<line x1="645.0" y1="680.5" x2="693.0" y2="680.5" stroke="#e6e6e6" stroke-width="2.4" />
<line x1="693.0" y1="634.0" x2="747.0" y2="638.5" stroke="#7e8589" stroke-width="1.8" />
<line x1="693.0" y1="681.0" x2="730.0" y2="683.5" stroke="#9aa0a3" stroke-width="2.0" />
<line x1="721.5" y1="651.0" x2="721.5" y2="728.0" stroke="#8a9094" stroke-width="3.0" />
<line x1="749.3" y1="638.0" x2="749.3" y2="728.0" stroke="#777e82" stroke-width="3.0" />
<line x1="772.5" y1="648.0" x2="772.5" y2="734.0" stroke="#7d8488" stroke-width="3.0" />
<line x1="794.6" y1="619.0" x2="794.6" y2="672.0" stroke="#7d8488" stroke-width="2.6" />
<line x1="846.0" y1="629.0" x2="846.0" y2="664.0" stroke="#59626a" stroke-width="2.6" />
<line x1="721.5" y1="652.0" x2="772.0" y2="612.0" stroke="#6f767a" stroke-width="1.6" />
<line x1="749.3" y1="638.0" x2="800.0" y2="597.0" stroke="#6f767a" stroke-width="1.6" />
<line x1="721.5" y1="693.0" x2="749.0" y2="671.0" stroke="#8b9195" stroke-width="1.6" />
<line x1="749.0" y1="671.0" x2="800.0" y2="628.0" stroke="#6a4a22" stroke-width="1.4" />
<line x1="772.5" y1="650.0" x2="812.0" y2="615.0" stroke="#777e82" stroke-width="1.6" />
<line x1="749.3" y1="660.0" x2="772.5" y2="674.0" stroke="#23292d" stroke-width="1.6" />
<line x1="749.3" y1="690.0" x2="772.5" y2="704.0" stroke="#23292d" stroke-width="1.4" />
<line x1="749.5" y1="751.0" x2="749.5" y2="832.0" stroke="#7d8488" stroke-width="3.0" />
<line x1="722.0" y1="655.0" x2="776.0" y2="830.0" stroke="#1c2226" stroke-width="1.8" />
<line x1="730.0" y1="700.0" x2="752.0" y2="760.0" stroke="#1c2226" stroke-width="1.4" />
<line x1="751.5" y1="750.0" x2="818.0" y2="944.7" stroke="#1a2024" stroke-width="1.8" />
<line x1="742.0" y1="748.0" x2="776.0" y2="838.0" stroke="#242b30" stroke-width="1.4" />
<line x1="794.5" y1="841.5" x2="794.5" y2="915.0" stroke="#7b8286" stroke-width="3.0" />
<line x1="822.6" y1="841.5" x2="822.6" y2="915.0" stroke="#7b8286" stroke-width="3.0" />
<line x1="847.0" y1="841.5" x2="847.0" y2="915.0" stroke="#7b8286" stroke-width="3.0" />
<line x1="865.7" y1="841.5" x2="865.7" y2="915.0" stroke="#6d7478" stroke-width="3.0" />
<line x1="774.9" y1="838.0" x2="774.9" y2="916.0" stroke="#858c90" stroke-width="3.0" />
<line x1="794.5" y1="842.3" x2="847.0" y2="842.3" stroke="#5b6367" stroke-width="2.2" />
<line x1="847.0" y1="839.8" x2="866.0" y2="842.5" stroke="#2d3438" stroke-width="2.6" />
<line x1="794.5" y1="879.0" x2="866.0" y2="879.0" stroke="#5b6367" stroke-width="2.2" />
<polygon points="790,914.5 866,914.5 866,918 790,918" fill="#15191c"/>
<polygon points="775,917 850,916 867,957 884.7,1000 900,1035 962,1165 986,1179 873,1184 873,1175 840,1090.6 803,1000 790,958" fill="url(#str2)"/>
<line x1="774.9" y1="881.0" x2="876.0" y2="1083.0" stroke="#dcdcdc" stroke-width="1.5" />
<line x1="777.5" y1="840.0" x2="877.5" y2="1083.0" stroke="#20262a" stroke-width="1.6" />
<line x1="776.0" y1="840.0" x2="876.0" y2="1083.0" stroke="#d9d4c2" stroke-width="1.3" />
<line x1="848.0" y1="840.0" x2="964.0" y2="1078.0" stroke="#1f2529" stroke-width="2.0" />
<line x1="846.8" y1="840.5" x2="962.8" y2="1078.5" stroke="#c9c4b0" stroke-width="1.0" />
<line x1="849.8" y1="883.0" x2="964.0" y2="1120.0" stroke="#9aa0a4" stroke-width="1.3" />
<line x1="820.0" y1="945.0" x2="820.0" y2="1020.0" stroke="#6c7377" stroke-width="3.0" />
<line x1="900.0" y1="945.0" x2="900.0" y2="985.0" stroke="#6c7377" stroke-width="3.0" />
<line x1="876.5" y1="1083.0" x2="876.5" y2="1183.0" stroke="#f0f0f0" stroke-width="4.4" />
<line x1="964.5" y1="1080.0" x2="964.5" y2="1179.0" stroke="#f0f0f0" stroke-width="4.4" />
<path d="M640.0,529.0 C651.0,529.8 684.9,531.2 705.7,533.6 C726.5,536.0 744.0,539.5 765.0,543.6 C786.0,547.8 812.3,554.1 831.7,558.5 C851.1,562.9 868.8,567.2 881.5,570.0 C894.2,572.8 897.0,574.4 908.0,575.0 C919.0,575.6 932.9,573.9 947.8,573.4 C962.7,572.9 978.2,571.8 997.6,571.8 C1017.0,571.8 1043.6,572.3 1064.0,573.4 C1084.4,574.5 1099.0,575.3 1120.0,578.4 C1141.0,581.5 1169.0,588.4 1190.0,592.0 C1211.0,595.6 1226.7,596.5 1246.0,600.0 C1265.3,603.5 1296.0,610.8 1306.0,613.0 L1306.0,613.0 C1296.0,613.7 1260.3,615.8 1246.0,617.0 C1231.7,618.2 1244.3,617.5 1220.0,620.0 C1195.7,622.5 1139.8,628.0 1100.0,632.0 C1060.2,636.0 1011.9,641.7 981.0,644.0 C950.1,646.3 931.5,646.5 914.7,646.0 C897.9,645.5 893.8,643.4 880.0,641.0 C866.2,638.6 850.9,635.8 831.7,631.5 C812.5,627.2 788.3,620.0 765.0,615.0 C741.7,610.0 712.8,605.8 692.0,601.6 C671.2,597.4 648.7,591.9 640.0,590.0 Z" fill="#020303"/>
<polygon points="887.5,1078.2 901.2,1092.4 899.8,1127.9 897.6,1147.4 898.5,1166.9 896.4,1178.4 890.6,1179.6 888.8,1174.0 886.5,1143.8 888.6,1127.9 886.5,1094.2" fill="#ececec"/>
<polygon points="907.4,1092.4 920.7,1078.2 923.0,1094.2 920.7,1127.9 919.8,1147.4 918.0,1166.9 920.7,1172.2 928.7,1180.2 912.7,1181.0 911.0,1174.0 910.0,1147.4 908.3,1127.9" fill="#e1e1e1"/>
<path d="M888.5,1128.5 L899.5,1128.5 M908.5,1128.5 L920.5,1128.5" stroke="#b5b5b5" stroke-width="1"/>
<polygon points="890.6,1070.2 918.0,1070.2 921.0,1080.0 911.0,1090.6 903.9,1093.0 896.8,1090.6 887.5,1080.0" fill="#efefef"/>
<path d="M891,1072 Q896,1088 903.9,1092 Q912,1088 917.5,1072" fill="none" stroke="#6b6b6b" stroke-width="0.9"/>
<path d="M880.5,1030 Q881,1024.5 888,1024 L899,1023 L911,1023 L919,1024 Q925,1025 925.5,1030 L919,1040 L918.3,1068.4 L890.4,1068.4 L887.5,1040 Z" fill="#f0f0f0"/>
<rect x="890.4" y="1067.2" width="28" height="2.6" fill="#3d3d3d"/>
<path d="M899.6,1012 L910.5,1012 L911.5,1024 L898.5,1024 Z" fill="#d6d6d6"/>
<ellipse cx="904.7" cy="1002.8" rx="9.8" ry="12.4" fill="#e9e9e9"/>
<ellipse cx="903.2" cy="1000" rx="7" ry="9" fill="#f3f3f3"/>
<polygon points="880.0,1028.0 887.5,1025.0 886.8,1057.0 877.4,1057.0" fill="#ededed"/>
<polygon points="875.0,1057.0 884.2,1057.0 882.8,1083.5 876.4,1083.5" fill="#8b8b8b"/>
<polygon points="876.8,1083.5 882.6,1083.5 885.0,1092.4 884.3,1104.8 879.4,1103.0 877.6,1092.0" fill="#f1f1f1"/>
<polygon points="918.0,1025.0 925.5,1028.0 927.2,1057.0 918.3,1057.0" fill="#e2e2e2"/>
<polygon points="919.5,1057.0 928.7,1057.0 930.0,1088.8 923.4,1088.8" fill="#868686"/>
<polygon points="923.6,1088.8 929.8,1088.8 930.5,1092.0 929.6,1105.7 925.1,1104.8 924.3,1092.0" fill="#ededed"/>
<rect x="514" y="642" width="18" height="92" fill="none" stroke="#ebebeb" stroke-width="3"/>
<line x1="514.0" y1="687.0" x2="532.0" y2="687.0" stroke="#ebebeb" stroke-width="3.0" />
<polygon points="542.8,0.0 650.5,0.0 640.0,1219.0 524.0,1219.0" fill="url(#pg17)" />
<polygon points="542.8,0.0 650.5,0.0 640.0,1219.0 524.0,1219.0" fill="url(#vdark)"/>
<polygon points="142.4,0.0 227.6,0.0 190.7,1219.0 100.0,1219.0" fill="url(#pg18)" />
<polygon points="142.4,0.0 227.6,0.0 190.7,1219.0 100.0,1219.0" fill="url(#vdark)"/>
<path d="M1692.7,0.0 L1773.7,0.0 L1821.0,1159.8 Q1780.8,1165.0 1736.7,1157.0 Z" fill="url(#pg19)" />
<polygon points="1692.7,0.0 1773.7,0.0 1821.0,1157.0 1736.7,1157.0" fill="url(#vdark)"/>
</svg>
</div>
<div id="side"><i style="top:79px"></i><i style="top:622px"></i><i style="top:1153px"></i></div>
<div id="status">
<span style="left:1373px;letter-spacing:1.1px">Millimeters</span>
<div id="sel"><b>CPlane</b><svg width="14" height="20" viewBox="0 0 14 20"><path d="M3 8 L7 3.5 L11 8 M3 12 L7 16.5 L11 12" fill="none" stroke="#8c8c8c" stroke-width="1.8" stroke-linecap="round" stroke-linejoin="round"/></svg></div>
<span style="left:1688px;letter-spacing:.75px">X: 81876.873</span>
<span style="left:1851px">Y:</span>
</div>
<div id="line"></div>
<div id="desk"><div id="dot"></div><svg id="shape" width="62" height="20" viewBox="0 0 62 20"><polygon points="0,20 50,10.5 58,20" fill="#7c8b98"/></svg></div>
</body>
</html>
